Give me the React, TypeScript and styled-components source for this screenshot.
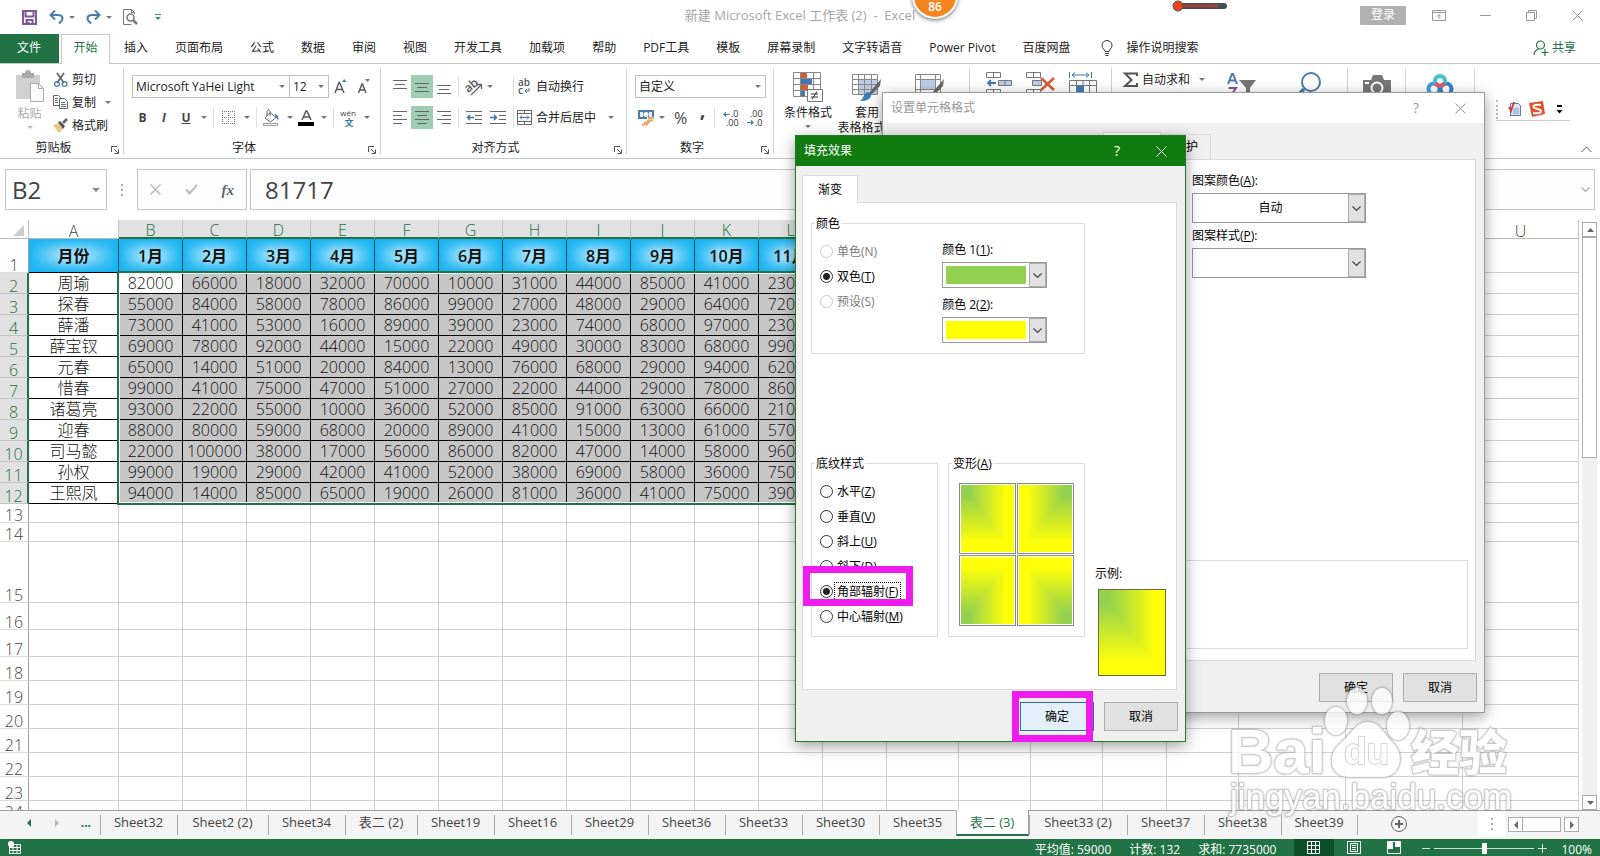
import React from 'react';
import styled, { createGlobalStyle } from 'styled-components';

const ui = `"Open Sans", "Noto Sans CJK SC", sans-serif`;

const Global = createGlobalStyle`
  * { box-sizing: border-box; }
  body { margin: 0; overflow: hidden; background: #fff; }
  button, input, select { font: inherit; color: inherit; margin: 0; padding: 0; border: 0; background: none; border-radius: 0; outline: 0; }
  select { appearance: none; }
  svg { display: block; flex: none; overflow: visible; }
`;

const Shell = styled.div`
  position: relative;
  display: flex;
  flex-direction: column;
  height: 100vh;
  overflow: hidden;
  font: 12px/16px ${ui};
  color: #222;
  background: #fff;
`;

/* ---------- title bar ---------- */
const TitleBar = styled.header`
  display: grid;
  grid-template-columns: 1fr auto 1fr;
  align-items: center;
  height: 34px;
  padding-bottom: 4px;
`;
const QuickAccess = styled.div`
  display: flex;
  align-items: center;
  padding: 4px 0 0 15px;
`;
const Title = styled.div`
  font-size: 13px;
  color: #a6a6a6;
  white-space: pre;
`;
const WindowControls = styled.div`
  display: flex;
  align-items: center;
  justify-content: flex-end;
  color: #999;
`;
const SignIn = styled.button`
  width: 46px;
  height: 19px;
  margin-right: 10px;
  background: #b1b1b1;
  color: #fff;
  border-radius: 1px;
  line-height: 18px;
`;
const Tool = styled.button<{ $w: number; $on?: boolean }>`
  display: flex;
  flex: none;
  align-items: center;
  justify-content: center;
  gap: 5px;
  width: ${(p) => p.$w}px;
  height: 23px;
  color: #444;
  background: ${(p) => (p.$on ? '#9fcdb3' : 'transparent')};
`;

/* ---------- ribbon tabs ---------- */
const TabStrip = styled.nav`
  display: flex;
  height: 30px;
  align-items: stretch;
  border-bottom: 1px solid #c8c8c8;
`;
const FileTab = styled.button`
  width: 59px;
  height: 29px;
  padding: 0 1px 1px 0;
  color: #fff;
  background: #217346;
`;
const TabList = styled.div`
  display: flex;
  flex: 1;
  gap: 27px;
  align-items: center;
  margin-left: 2px;
`;
const RibbonTab = styled.button<{ $active?: boolean }>`
  height: 30px;
  white-space: nowrap;
  padding: 0 0 1px;
  ${(p) =>
    p.$active &&
    `color: #217346; background: #fff; border: 1px solid #c8c8c8; border-bottom: 0; width: 49px; margin-right: -13px; padding-bottom: 2px; `}
`;
const TellMe = styled.button`
  display: flex;
  align-items: center;
  gap: 14px;
  margin-left: 3px;
  padding-bottom: 1px;
`;
const Share = styled.button`
  display: flex;
  align-items: center;
  gap: 3px;
  margin: 0 24px 0 auto;
  padding-bottom: 1px;
  color: #217346;
`;

/* ---------- ribbon ---------- */
const Ribbon = styled.div`
  display: flex;
  height: 95px;
  padding: 4px 0;
  border-bottom: 1px solid #c8c8c8;
`;
const Group = styled.section<{ $w: number }>`
  display: flex;
  flex-direction: column;
  justify-content: space-between;
  flex: none;
  width: ${(p) => p.$w}px;
  border-right: 1px solid #d2d2d2;
`;
const GroupFoot = styled.footer`
  display: flex;
  align-items: flex-end;
  height: 14px;
  padding-right: 4px;
`;
const GroupName = styled.span`
  flex: 1;
  padding-right: 4px;
  line-height: 12px;
  text-align: center;
`;
const Rows = styled.div<{ $left: number }>`
  display: flex;
  flex-direction: column;
  gap: 8px;
  padding: 7px 0 0 ${(p) => p.$left}px;
`;
const Row = styled.div`
  display: flex;
  align-items: center;
  height: 23px;
`;
const Rule = styled.i`
  width: 1px;
  height: 21px;
  margin: 0 3px;
  background: #e1e1e1;
`;
const Caret = styled.i<{ $dim?: boolean }>`
  border: 3px solid transparent;
  border-top: 3px solid ${(p) => (p.$dim ? '#bbb' : '#777')};
  border-bottom: 0;
`;
const Combo = styled.label<{ $w: number }>`
  position: relative;
  width: ${(p) => p.$w}px;
  height: 23px;
  margin-right: -1px;
  border: 1px solid #c0c0c0;
  select { width: 100%; height: 21px; padding-left: 3px; display: block; }
  i { position: absolute; right: 4px; top: 9px; }
`;
const Clip = styled.div`
  display: flex;
  padding-left: 14px;
`;
const BigTool = styled.button<{ $w: number; $dim?: boolean }>`
  display: flex;
  flex-direction: column;
  align-items: center;
  width: ${(p) => p.$w}px;
  padding-top: 4px;
  line-height: 15px;
  color: ${(p) => (p.$dim ? '#aaa' : 'inherit')};
  white-space: nowrap;
  svg { margin-bottom: 3px; }
  > i { margin-top: 5px; }
`;
const MenuLine = styled.span`
  display: flex;
  align-items: center;
  gap: 5px;
`;
const ToolStack = styled.div`
  display: flex;
  flex-direction: column;
  padding-left: 8px;
`;
const TextTool = styled.button<{ $caretGap?: number }>`
  display: flex;
  align-items: center;
  height: 23px;
  gap: 3px;
  white-space: nowrap;
  i { margin-left: ${(p) => p.$caretGap ?? 0}px; }
`;
const BigRow = styled.div<{ $left: number; $gap?: number }>`
  display: flex;
  align-items: flex-start;
  gap: ${(p) => p.$gap ?? 0}px;
  padding-left: ${(p) => p.$left}px;
`;
const RibbonEnd = styled.div`
  display: flex;
  flex: 1;
  flex-direction: column;
  align-items: flex-end;
  justify-content: space-between;
  padding: 30px 8px 0 21px;
`;
const AddinBar = styled.div`
  display: flex;
  align-items: center;
  align-self: flex-start;
  height: 23px;
  gap: 8px;
  padding: 0 5px 0 0;
  border-bottom: 1px solid #d0d0d0;
`;
const Grip = styled.i`
  height: 19px;
  border-left: 2px dotted #bbb;
  margin-right: 2px;
`;
const PercentText = styled.span`
  font-size: 16px;
  color: #444;
`;
const CommaText = styled.b`
  height: 28px;
  font-size: 20px;
  line-height: 12px;
  color: #444;
`;

/* ---------- formula bar ---------- */
const FormulaBar = styled.div`
  display: flex;
  height: 61px;
  padding: 10px 5px 10px;
`;
const NameBox = styled.label`
  display: flex;
  align-items: center;
  width: 102px;
  border: 1px solid #c6c6c6;
  padding: 0 6px;
  input { flex: 1; width: 60px; font-size: 24px; line-height: 36px; color: #444; }
`;
const Dots = styled.div`
  display: flex;
  flex-direction: column;
  justify-content: center;
  gap: 3px;
  margin: 0 14px;
  i { width: 2px; height: 2px; background: #aaa; }
`;
const EditButtons = styled.div`
  display: flex;
  align-items: center;
  justify-content: space-around;
  width: 110px;
  border: 1px solid #c6c6c6;
  margin-right: 3px;
  background: #fdfdfd;
`;
const FxMark = styled.i`
  font: italic 700 15px/16px "Liberation Serif", serif;
  color: #666;
`;
const FormulaBox = styled.label`
  display: flex;
  align-items: center;
  flex: 1;
  padding: 0 4px 0 14px;
  border: 1px solid #c6c6c6;
  background: #fdfdfd;
  input { flex: 1; font-size: 24px; line-height: 36px; color: #444; }
`;

/* ---------- sheet ---------- */
const SheetArea = styled.main`
  display: flex;
  flex: 1;
  min-height: 0;
`;
const GridView = styled.div`
  position: relative;
  flex: 1;
  overflow: hidden;
`;
const SheetTable = styled.table`
  width: 100%;
  table-layout: fixed;
  border-collapse: separate;
  border-spacing: 0;
  font-size: 16px;
  font-weight: 300;
  text-align: center;
`;
const Tr = styled.tr<{ $h: number }>`
  height: ${(p) => p.$h}px;
`;
const ColHead = styled.th<{ $sel?: boolean }>`
  padding: 4px 0 0;
  height: 19px;
  line-height: 13px;
  font-weight: 300;
  color: ${(p) => (p.$sel ? '#217346' : '#444')};
  background: ${(p) => (p.$sel ? '#e1e1e1' : '#fff')};
  border-right: 1px solid #c4c4c4;
  border-bottom: ${(p) => (p.$sel ? '2px solid #217346' : '1px solid #b8b8b8')};
`;
const RowHead = styled.th<{ $sel?: boolean }>`
  padding: 0;
  line-height: 14px;
  vertical-align: bottom;
  font-weight: 300;
  color: ${(p) => (p.$sel ? '#217346' : '#444')};
  background: ${(p) => (p.$sel ? '#e1e1e1' : '#fff')};
  border-bottom: 1px solid ${(p) => (p.$sel ? '#c4c4c4' : '#dcdcdc')};
  border-right: ${(p) => (p.$sel ? '2px solid #217346' : '1px solid #a0a0a0')};
`;
const Cell = styled.td<{ $kind?: 'head' | 'name' | 'value' | 'active' }>`
  padding: 0;
  line-height: 20px;
  overflow: hidden;
  white-space: nowrap;
  border-right: 1px solid #d0d0d0;
  border-bottom: 1px solid #d0d0d0;
  ${(p) => p.$kind && `border-color: #000; color: #111;`}
  ${(p) => p.$kind === 'value' && `background: #c6c6c6;`}
  ${(p) =>
    p.$kind === 'head' &&
    `font-weight: 600; border-right-color: #1b4d5c;
     background:
      linear-gradient(to right, #19b4f1, rgba(25,180,241,0) 38%, rgba(25,180,241,0) 62%, #19b4f1),
      linear-gradient(to bottom, #19b4f1, rgba(25,180,241,0) 40%, rgba(25,180,241,0) 60%, #19b4f1),
      #9fe0fb;`}
`;
/* short blank rows must not be stretched by an empty cell's line box */
const Blank = styled(Cell)`
  line-height: 14px;
`;
const Selection = styled.div`
  position: absolute;
  left: 117px;
  top: 51px;
  width: 770px;
  height: 234px;
  border: 2px solid #217346;
  box-shadow: inset 0 0 0 1px #fff;
  pointer-events: none;
`;
const VScroll = styled.div`
  display: flex;
  flex-direction: column;
  width: 15px;
  margin: 2px 3px 0;
  background: #f0f0f0;
`;
const ScrollButton = styled.button`
  display: flex;
  align-items: center;
  justify-content: center;
  width: 15px;
  height: 15px;
  border: 1px solid #ababab;
  background: #fff;
`;
const VThumb = styled.div`
  height: 221px;
  border: 1px solid #ababab;
  background: #fff;
`;
const Push = styled.div`
  flex: 1;
`;

/* ---------- sheet tabs ---------- */
const SheetTabs = styled.nav`
  display: flex;
  align-items: flex-start;
  height: 29px;
  border-top: 1px solid #a0a0a0;
  background: #f4f4f4;
`;
const TabNav = styled.div`
  display: flex;
  align-items: center;
  justify-content: space-between;
  width: 100px;
  height: 24px;
  padding: 0 9px 0 25px;
  color: #217346;
  font-weight: 700;
`;
const SheetTab = styled.button<{ $w: number; $active?: boolean }>`
  flex: none;
  width: ${(p) => p.$w}px;
  height: 20px;
  margin-top: 4px;
  padding: 0 1px 6px 0;
  font-size: 13px;
  line-height: 14px;
  color: #444;
  border-left: 1px solid #ababab;
  ${(p) =>
    p.$active &&
    `height: 26px; margin-top: -1px; padding: 0 1px 1px 0; color: #217346; background: #fff; border-right: 1px solid #a0a0a0; border-bottom: 2px solid #217346;`}
`;
const AddSheet = styled.button`
  padding: 0 33px 2px;
  height: 20px;
  margin-top: 4px;
  border-left: 1px solid #ababab;
`;
const HScroll = styled.div`
  display: flex;
  height: 15px;
  margin: 6px 21px 0 3px;
  background: #f4f4f4;
`;
const HThumb = styled.div`
  width: 39px;
  margin: 0 3px 0 -1px;
  border: 1px solid #ababab;
  background: #fff;
`;
const HGrip = styled.div`
  display: flex;
  justify-content: center;
  width: 27px;
  height: 26px;
  margin-left: auto;
  background: #fff;
`;

/* ---------- status bar ---------- */
const StatusBar = styled.footer`
  display: flex;
  align-items: center;
  height: 17px;
  padding: 0 8px;
  color: #fff;
  background: #217346;
`;
const Stats = styled.div`
  display: flex;
  gap: 18px;
  margin: 4px 18px 0 auto;
`;
const View = styled.button<{ $on?: boolean }>`
  display: flex;
  align-items: center;
  justify-content: center;
  width: 40px;
  height: 17px;
  background: ${(p) => (p.$on ? '#0b4f29' : 'transparent')};
`;
const Zoom = styled.label`
  display: flex;
  align-items: center;
  gap: 4px;
  margin: 2px 14px 0 8px;
  input {
    width: 100px;
    height: 12px;
    appearance: none;
    background: linear-gradient(#cfe3d8, #cfe3d8) center / 100% 1px no-repeat;
  }
  input::-webkit-slider-thumb { appearance: none; width: 5px; height: 11px; background: #fff; }
`;
const ZoomText = styled.span`
  margin-top: 4px;
`;

/* ---------- dialogs ---------- */
const Dialog = styled.section<{ $x: number; $y: number; $w: number; $h: number; $front?: boolean }>`
  position: absolute;
  isolation: isolate;
  left: ${(p) => p.$x}px;
  top: ${(p) => p.$y}px;
  width: ${(p) => p.$w}px;
  height: ${(p) => p.$h}px;
  display: flex;
  flex-direction: column;
  color: #000;
  background: #f0f0f0;
  border: 1px solid ${(p) => (p.$front ? '#1f7a2a' : '#9a9a9a')};
  box-shadow: 0 4px 14px rgba(0, 0, 0, 0.38);
`;
const DialogTitle = styled.header<{ $front?: boolean }>`
  display: flex;
  align-items: center;
  height: 30px;
  flex: none;
  padding: 0 18px 0 8px;
  color: ${(p) => (p.$front ? '#fff' : '#999')};
  background: ${(p) => (p.$front ? '#107c10' : '#fff')};
`;
const DialogHelp = styled.button`
  margin: 0 34px 0 auto;
  width: 10px;
  font-size: 14px;
`;
const DialogTabs = styled.div<{ $left: number }>`
  display: flex;
  align-items: flex-end;
  padding: 9px 0 0 ${(p) => p.$left}px;
  position: relative;
  z-index: 1;
`;
const DialogTab = styled.button<{ $w: number; $active?: boolean }>`
  width: ${(p) => p.$w}px;
  height: ${(p) => (p.$active ? 28 : 25)}px;
  margin-bottom: ${(p) => (p.$active ? -1 : 0)}px;
  border: 1px solid #dcdcdc;
  border-bottom: 0;
  background: ${(p) => (p.$active ? '#fff' : '#f0f0f0')};
`;
const Panel = styled.div<{ $left: number; $top: number }>`
  display: flex;
  flex-direction: column;
  flex: 1;
  margin: 0 8px 0 6px;
  padding: ${(p) => p.$top}px 7px 0 ${(p) => p.$left}px;
  border: 1px solid #dcdcdc;
  background: #fff;
`;
const PatternFields = styled.div`
  padding-left: 294px;
`;
const DialogFoot = styled.footer`
  display: flex;
  justify-content: flex-end;
  gap: 10px;
  padding: 12px 7px 10px;
`;
const PushButton = styled.button<{ $hot?: boolean }>`
  width: 74px;
  height: 29px;
  border: 1px solid ${(p) => (p.$hot ? '#2f6fa8' : '#adadad')};
  background: ${(p) => (p.$hot ? '#e3f0fa' : '#e1e1e1')};
`;
const Box = styled.fieldset<{ $w: number; $h: number }>`
  width: ${(p) => p.$w}px;
  height: ${(p) => p.$h}px;
  margin: 0;
  padding: 7px 8px 0;
  border: 1px solid #dcdcdc;
  legend { margin-left: -5px; padding: 2px 1px 0; line-height: 16px; height: 18px; }
`;
const Columns = styled.div<{ $gap: number; $grow?: boolean }>`
  display: flex;
  flex: ${(p) => (p.$grow ? 1 : 'none')};
  gap: ${(p) => p.$gap}px;
`;
const Spread = styled.div`
  display: flex;
  flex-direction: column;
  justify-content: space-between;
  height: 423px;
`;
const Options = styled.div<{ $top?: number }>`
  display: flex;
  flex-direction: column;
  padding-top: ${(p) => p.$top ?? 0}px;
`;
const Option = styled.label<{ $off?: boolean }>`
  display: flex;
  align-items: center;
  gap: 2px;
  height: 25px;
  white-space: nowrap;
  color: ${(p) => (p.$off ? '#7a7a7a' : '#000')};
  input {
    appearance: none;
    width: 13px;
    height: 13px;
    border: 1px solid ${(p) => (p.$off ? '#ccc' : '#333')};
    border-radius: 50%;
    background: #fff;
  }
  input:checked { background: radial-gradient(#222 0 3px, #fff 4px); }
  span { padding: 0 2px; line-height: 17px; }
`;
const FocusText = styled.span`
  outline: 1px dotted #000;
`;
const Field = styled.label`
  display: flex;
  flex-direction: column;
  height: 55px;
`;
const Drop = styled.span<{ $w: number; $h: number }>`
  display: flex;
  width: ${(p) => p.$w}px;
  height: ${(p) => p.$h}px;
  margin-top: 4px;
  border: 1px solid #999;
  background: #fff;
  select { flex: 1; min-width: 0; text-align: center; text-align-last: center; }
`;
const Swatch = styled.select<{ $c: string }>`
  margin: 3px;
  background: ${(p) => p.$c};
`;
const DropArrow = styled.span`
  display: flex;
  align-items: center;
  justify-content: center;
  width: 17px;
  border: 1px solid #adadad;
  background: #e1e1e1;
`;
const Thumbs = styled.div`
  display: grid;
  grid-template-columns: 57px 57px;
  grid-auto-rows: 71px;
  gap: 1px;
  padding: 4px 0 0 2px;
`;
const Thumb = styled.button`
  padding: 1px;
  border: 1px solid #888;
  svg { width: 100%; height: 100%; }
`;
const SampleArea = styled.div`
  display: flex;
  flex-direction: column;
  justify-content: flex-end;
  padding: 0 0 13px 10px;
`;
const Sample = styled.div`
  width: 68px;
  height: 87px;
  margin: 7px 0 0 3px;
  border: 1px solid #6a6a3a;
  svg { width: 100%; height: 100%; }
`;
const PreviewBox = styled.div`
  height: 89px;
  margin: auto 0 11px;
  border: 1px solid #dcdcdc;
`;
const Highlight = styled.div<{ $x: number; $y: number; $w: number; $h: number }>`
  position: absolute;
  left: ${(p) => p.$x}px;
  top: ${(p) => p.$y}px;
  width: ${(p) => p.$w}px;
  height: ${(p) => p.$h}px;
  border: 7px solid #ef1cee;
  pointer-events: none;
`;
const Floating = styled.div<{ $x: number; $y: number }>`
  position: absolute;
  left: ${(p) => p.$x}px;
  top: ${(p) => p.$y}px;
  pointer-events: none;
`;
const Ball = styled.div`
  width: 46px;
  height: 46px;
  padding-top: 24px;
  border: 2px solid #fff;
  border-radius: 50%;
  text-align: center;
  color: #fff;
  font-weight: 600;
  background: #f5861f;
  box-shadow: 0 1px 4px rgba(0, 0, 0, 0.6);
`;

/* ---------- icons ---------- */
const Lines = ({ rows, w = 14 }: { rows: [number, number, number][]; w?: number }) => (
  <svg width={w} height="14" stroke="#666" fill="none">
    {rows.map(([y, a, b]) => (
      <path key={y} d={`M${a} ${y}.5H${b}`} />
    ))}
  </svg>
);
const Launcher = () => (
  <svg width="8" height="8" fill="none" stroke="#555">
    <path d="M.5 6V.5H6M3 3l4 4M7.5 3.5v4h-4" />
  </svg>
);
const Chevron = ({ c = '#444', s = 9 }: { c?: string; s?: number }) => (
  <svg width={s} height={s} viewBox="0 0 9 9" fill="none" stroke={c} strokeWidth="1.2">
    <path d="M.5 2.500l4 4 4-4" />
  </svg>
);
const Cross = ({ s = 11, c = 'currentColor', w = 1 }: { s?: number; c?: string; w?: number }) => (
  <svg width={s} height={s} viewBox="0 0 11 11" stroke={c} strokeWidth={w} fill="none">
    <path d="M.5.5l10 10M10.5.5l-10 10" />
  </svg>
);
const SaveIcon = () => (
  <svg width="15" height="15" fill="none" stroke="#80569c" strokeWidth="2">
    <path d="M1 1h13v13H1zM3.500 1v5.500h8V1" />
    <path d="M4.500 14v-4h6v4M6.500 14v-2" />
  </svg>
);
const UndoIcon = ({ flip }: { flip?: boolean }) => (
  <svg width="15" height="14" viewBox="0 0 15 14" fill="none" stroke="#4a7dae" strokeWidth="2">
    <g transform={flip ? 'matrix(-1 0 0 1 15 0)' : undefined}>
      <path d="M2 5h7c5 0 6 4 2 7.500l-1 1M6 .5L1.500 5 6 9.500" />
    </g>
  </svg>
);
const PreviewIcon = () => (
  <svg width="15" height="17" fill="none" stroke="#777">
    <path d="M11.500 5V3.500l-3-3h-8v15h8M8.500.5v3h3" />
    <circle cx="7.500" cy="8.500" r="3.500" strokeWidth="1.500" />
    <path d="M10 11l4 4" strokeWidth="2.500" />
  </svg>
);
const PasteIcon = () => (
  <svg width="28" height="31">
    <path d="M0 3h24v24H0z" fill="#d0d0d0" />
    <path d="M6 1h3a3 3 0 016 0h3v5H6z" fill="#aaa" />
    <path d="M14.500 11.500h8l5 5v13h-13z" fill="#fafafa" stroke="#aaa" />
    <path d="M22.500 11.500v5h5" fill="none" stroke="#aaa" />
  </svg>
);
const CutIcon = () => (
  <svg width="16" height="16" fill="none">
    <path d="M4 1l7 10M11 1L4 11" stroke="#666" strokeWidth="1.800" />
    <circle cx="4" cy="12" r="2.400" stroke="#4a7dae" strokeWidth="1.300" />
    <circle cx="11.500" cy="12" r="2.400" stroke="#4a7dae" strokeWidth="1.300" />
  </svg>
);
const CopyIcon = () => (
  <svg width="16" height="15" fill="#fff" stroke="#666">
    <path d="M.5.500h5l2 2v8h-7zM2 3.500h3M2 5.500h3M2 7.500h3" />
    <path d="M6.500 3.500h5l3 3v7h-8z" />
    <path d="M8 7.500h4M8 9.500h5M8 11.500h5" stroke="#4a7dae" />
  </svg>
);
const BrushIcon = () => (
  <svg width="16" height="15">
    <path d="M0 7l6-2 4 6-4 4z" fill="#edc587" />
    <path d="M5 4l2-1 5 5-2 3z" fill="#555" />
    <path d="M9 4l4-4 2 2-4 4z" fill="#666" />
  </svg>
);
const BorderIcon = () => (
  <svg width="14" height="14" fill="none" stroke="#777" strokeDasharray="1 1">
    <path d="M0 .500h13M0 6.500h13M0 12.500h13M.5 0v13M6.500 0v13M12.500 0v13" />
  </svg>
);
const BucketIcon = () => (
  <svg width="17" height="16" fill="none" stroke="#666">
    <path d="M7 2.500l6 5-5.500 4.500L2 8zM7 6V1.500a1.500 1.500 0 00-3 0V6" />
    <path d="M12 4c3 1 4 3 3 7-1-3-2-4-3-4z" fill="#4a7dae" stroke="none" />
    <path d="M.5 13.500h14v2H.5z" fill="#fff" stroke="#999" />
  </svg>
);
const FontColorIcon = () => (
  <svg width="17" height="16">
    <path d="M4 10L8 1h1l4 9M5.500 7h6" stroke="#555" strokeWidth="1.500" fill="none" />
    <path d="M0 12h16v4H0z" fill="#000" />
  </svg>
);
const GrowFont = ({ down }: { down?: boolean }) => (
  <svg width="14" height="15">
    <path d={down ? 'M1.500 14l3.500-9h.5l3.500 9M3 11h5' : 'M1 14L5 3.500h.5L10 14M2.500 10.500h6'} stroke="#555" strokeWidth="1.400" fill="none" />
    <path d={down ? 'M8 0h5l-2.500 3z' : 'M8 3h4.500L10.200 0z'} fill="#4a7dae" />
  </svg>
);
const PhoneticIcon = () => (
  <svg width="17" height="18" viewBox="0 0 17 18" fontFamily={ui} textAnchor="middle">
    <text x="8" y="7" fontSize="8" fill="#444">wén</text>
    <text x="9" y="17" fontSize="9" fontWeight="700" fill="#3b76ad">文</text>
  </svg>
);
const RotateIcon = () => (
  <svg width="18" height="16" viewBox="0 0 18 16">
    <text x="1" y="12" fontSize="12" fontFamily={ui} fontWeight="600" fill="#555" transform="rotate(-40 5 10)">ab</text>
    <path d="M6 16l10-10M12 5.500h4.500V10" stroke="#666" fill="none" strokeWidth="1.300" />
  </svg>
);
const IndentIcon = ({ out }: { out?: boolean }) => (
  <svg width="17" height="14" fill="none" stroke="#666">
    <path d="M0 .500h16M9 4.500h7M9 8.500h7M0 12.500h16" />
    <path d={out ? 'M8 6.500H1.500M4 4L1.500 6.500 4 9' : 'M0 6.500h6.500M4 4l2.500 2.500L4 9'} stroke="#3b76ad" strokeWidth="1.500" />
  </svg>
);
const WrapIcon = () => (
  <svg width="16" height="16" viewBox="0 0 16 16" fontFamily={ui}>
    <text x="1" y="7" fontSize="10" fontWeight="600" fill="#555">ab</text>
    <text x="1" y="15" fontSize="10" fontWeight="600" fill="#555">c</text>
    <path d="M12 9v3H8M10 10l-2 2 2 2" stroke="#3b76ad" fill="none" />
  </svg>
);
const MergeIcon = () => (
  <svg width="16" height="15" fill="none" stroke="#666">
    <path d="M.5.500h14v14H.5zM.5 3.500h14M.5 11.500h14M7.500.500v3M7.500 11.500v3" />
    <path d="M3 7.500h9M5 5.500l-2 2 2 2M10 5.500l2 2-2 2" stroke="#3b76ad" />
  </svg>
);
const MoneyIcon = () => (
  <svg width="17" height="16">
    <path d="M0 0h16v9H0z" fill="#4a7dae" />
    <path d="M2 2h3v5H2zM11 2h3v5h-3z" fill="#e6eef6" />
    <circle cx="8" cy="4.500" r="2.500" fill="#fff" />
    <path d="M9 7h7v9H3v-3h6z" fill="#fff" />
    <path d="M10 8h6M9 10.500h6M6 12.500h6M4 14.500h6" stroke="#e7a868" strokeWidth="1.800" />
  </svg>
);
const DecimalIcon = ({ less }: { less?: boolean }) => (
  <svg width="17" height="16" viewBox="0 0 17 16" fontSize="9" fontFamily={ui} fill="#333">
    <text x={less ? 3 : 8} y="7">{less ? '.00' : '.0'}</text>
    <text x={less ? 8 : 3} y="16">{less ? '.0' : '.00'}</text>
    <path d={less ? 'M0 12.500h6M4 10.500l2 2-2 2' : 'M7 4.500H1M3 2.500l-2 2 2 2'} stroke="#3b76ad" strokeWidth="1.200" fill="none" />
  </svg>
);
const CondIcon = () => (
  <svg width="30" height="30">
    <path d="M.5.500h27v24H.5zM.5 6.500h27M.5 12.500h27M.5 18.500h27M7.500.500v24M20.500.500v24" fill="#fff" stroke="#888" />
    <path d="M8 1h6v5H8zM8 13h7v5H8z" fill="#d0603c" />
    <path d="M8 7h11v5H8zM8 19h4v5H8z" fill="#4477b0" />
    <path d="M14.500 17.500h15v12h-15z" fill="#fff" stroke="#777" />
    <path d="M18 22h7M18 25h7M24 19.500l-5 8" stroke="#333" />
  </svg>
);
const FormatTableIcon = ({ plain }: { plain?: boolean }) => (
  <svg width="30" height="30">
    <path d="M.5 2.500h25v20H.5z" fill="#fff" stroke="#888" />
    <path d={plain ? 'M6 7h14v11H6z' : 'M7 8h18v14H7z'} fill="#b9cde5" />
    <path d={plain ? 'M.5 7.500h25M5.500 2.500v20M20.500 2.500v20M.5 17.500h25' : 'M.5 7.500h25M.5 12.500h25M.5 17.500h25M6.500 2.500v20M12.500 2.500v20M19.500 2.500v20'} stroke="#888" fill="none" />
    <path d="M29 7l-1 7-9 9-2-2z" fill="#666" />
    <path d="M16 20c3 1 4 4 2 6-3 3-7 3-10 3 4-2 3-8 8-9z" fill="#3b7cb8" />
  </svg>
);
const InsertIcon = () => (
  <svg width="27" height="26" fill="none" stroke="#777">
    <path d="M.5.500h14v5H.5zM7.500.500v5M.5 17.500h14v5H.5zM7.500 17.500v5" />
    <path d="M12.500 8.500h13v5h-13zM19 8.500v5" fill="#b9cde5" />
    <path d="M10 11H2M5 8l-3 3 3 3" stroke="#3b76ad" strokeWidth="1.800" />
  </svg>
);
const DeleteIcon = () => (
  <svg width="30" height="26" fill="none" stroke="#777">
    <path d="M.5.500h14v5H.5zM7.500.500v5M.5 17.500h14v5H.5zM7.500 17.500v5" />
    <path d="M6.500 8.500h9v5h-9z" fill="#b9cde5" />
    <path d="M15 6l13 12M28 6L15 18" stroke="#d9583c" strokeWidth="2.500" />
  </svg>
);
const SizeIcon = () => (
  <svg width="29" height="30" fill="none" stroke="#777">
    <path d="M.5 0v6M22.500 0v6M3 3h17M6 .500L3 3l3 2.500M17 .500L20 3l-3 2.500" stroke="#3b76ad" />
    <path d="M.5 8.500h27v20H.5zM.5 13.500h27M7.500 8.500v20M20.500 8.500v20M14 8.500v5" />
    <path d="M8 14h7v12H8z" fill="#3b7cb8" stroke="none" />
  </svg>
);
const SigmaIcon = () => (
  <svg width="16" height="16" fill="none" stroke="#555" strokeWidth="2">
    <path d="M14 4V1.500H2L8.500 8 2 14H14v-3" />
  </svg>
);
const SortIcon = () => (
  <svg width="30" height="30">
    <path d="M1 12L5 2h1l4 10M2.500 8.500h6" stroke="#4a7dae" strokeWidth="2" fill="none" />
    <path d="M1.500 16H9L2 26h8" stroke="#80569c" strokeWidth="2" fill="none" />
    <path d="M12 8h17l-6 8v10l-4-3v-7z" fill="#777" />
  </svg>
);
const FindIcon = () => (
  <svg width="26" height="28" fill="none" stroke="#4a7dae">
    <circle cx="14" cy="10" r="9" strokeWidth="2" />
    <path d="M7 17l-7 7" strokeWidth="3.500" />
  </svg>
);
const CameraIcon = () => (
  <svg width="28" height="27">
    <path d="M0 8h8l2-5h9l2 5h7v19H0z" fill="#777" />
    <circle cx="14" cy="16" r="5.500" fill="#777" stroke="#fff" strokeWidth="2" />
    <path d="M2 10h4v2H2z" fill="#fff" />
  </svg>
);
const CloudIcon = () => (
  <svg width="28" height="28" fill="none" strokeWidth="4">
    <circle cx="7" cy="17" r="5.500" stroke="#3d9be0" />
    <circle cx="19" cy="17" r="5.500" stroke="#2f7fd0" />
    <circle cx="13" cy="9" r="5" stroke="#4cc0c8" />
    <path d="M8.500 11a5 5 0 009 0" stroke="#e25563" />
  </svg>
);
const PersonIcon = () => (
  <svg width="16" height="16" fill="none" stroke="#217346" strokeWidth="1.200">
    <circle cx="7.500" cy="5" r="4" />
    <path d="M1 15c0-3.500 2-5 4.500-6M12 9v7M8.500 12.500h7" />
  </svg>
);
const BulbIcon = () => (
  <svg width="12" height="17" fill="none" stroke="#333">
    <path d="M4 11.500c0-2-3-3-3-6a5 5 0 0110 0c0 3-3 4-3 6zM4 13.500h4M4.500 15.500h3" />
  </svg>
);
const NoteIcon = () => (
  <svg width="13" height="16">
    <path d="M2.500 2.500h8l2 2v10h-10z" fill="#dce6f5" stroke="#5b7bb0" />
    <path d="M5 8h6M5 10h6M5 12h6" stroke="#7f9dcc" />
    <path d="M1 6l2 4 3-9" stroke="#d8392b" strokeWidth="1.800" fill="none" />
  </svg>
);
const SogouIcon = () => (
  <svg width="16" height="16">
    <path d="M0 2l14-2 2 13-13 3z" fill="#e4522b" />
    <path d="M12 4C7 3.500 4 4 4.500 6S12 7.500 12 10s-4 2.500-8 2" stroke="#fff" strokeWidth="2" fill="none" />
  </svg>
);
const Tri = ({ d, c = '#666' }: { d: string; c?: string }) => (
  <svg width="8" height="8" fill={c}>
    <path d={d} />
  </svg>
);
const CornerFade = ({ id, fx, fy }: { id: string; fx?: boolean; fy?: boolean }) => (
  <svg viewBox="0 0 100 100" preserveAspectRatio="none">
    <defs>
      <linearGradient id={`${id}h`} x1="0" x2="1" y1="0" y2="0">
        <stop offset=".15" stopColor="#92d050" />
        <stop offset=".85" stopColor="#ffff08" />
      </linearGradient>
      <linearGradient id={`${id}v`} x1="0" x2="0" y1="0" y2="1">
        <stop offset=".15" stopColor="#92d050" />
        <stop offset=".85" stopColor="#ffff08" />
      </linearGradient>
    </defs>
    <g transform={`matrix(${fx ? -1 : 1} 0 0 ${fy ? -1 : 1} ${fx ? 100 : 0} ${fy ? 100 : 0})`}>
      <path d="M0 0h100v100H0z" fill={`url(#${id}h)`} />
      <path d="M0 0v100h100z" fill={`url(#${id}v)`} />
    </g>
  </svg>
);
const MarkArt = styled.svg`
  opacity: 0.78;
  paint-order: stroke;
  filter: drop-shadow(0 0 1px rgba(0, 0, 0, 0.4));
`;
const Watermark = () => (
  <MarkArt width="300" height="140" viewBox="0 0 300 140" fill="#fff" stroke="#bbb" strokeWidth="1.500" fontFamily={`"Liberation Sans", "Noto Sans CJK SC", sans-serif`} fontWeight="700">
    <ellipse cx="107" cy="41" rx="11" ry="14" />
    <ellipse cx="128" cy="21" rx="10" ry="13" />
    <ellipse cx="153" cy="21" rx="10" ry="13" />
    <ellipse cx="169" cy="46" rx="11" ry="14" />
    <path d="M139 42c12 0 16 12 24 20 14 13 8 34-8 35-8 0-28 0-36 0-18-1-22-22-7-34 10-9 15-21 27-21z" />
    <text x="-1" y="93" fontSize="63">Bai</text>
    <text x="115" y="84" fontSize="37">du</text>
    <text x="182" y="90" fontSize="48" fontWeight="900">经验</text>
    <text x="1" y="129" fontSize="35" fontWeight="400">jingyan.baidu.com</text>
  </MarkArt>
);

/* ---------- data ---------- */
const columns = [...'ABCDEFGHIJKLMNOPQRSTU'];
const columnWidth = (c: string) =>
  ({ A: 90, N: 72, O: 72, P: 72, R: 72, S: 107, T: 117 } as Record<string, number>)[c] ?? 64;
const isSelected = (c: string) => c > 'A' && c < 'N';
const people: [string, number[]][] = [
  ['周瑜', [82, 66, 18, 32, 70, 10, 31, 44, 85, 41, 23]],
  ['探春', [55, 84, 58, 78, 86, 99, 27, 48, 29, 64, 72]],
  ['薛潘', [73, 41, 53, 16, 89, 39, 23, 74, 68, 97, 23]],
  ['薛宝钗', [69, 78, 92, 44, 15, 22, 49, 30, 83, 68, 99]],
  ['元春', [65, 14, 51, 20, 84, 13, 76, 68, 29, 94, 62]],
  ['惜春', [99, 41, 75, 47, 51, 27, 22, 44, 29, 78, 86]],
  ['诸葛亮', [93, 22, 55, 10, 36, 52, 85, 91, 63, 66, 21]],
  ['迎春', [88, 80, 59, 68, 20, 89, 41, 15, 13, 61, 57]],
  ['司马懿', [22, 100, 38, 17, 56, 86, 82, 47, 14, 58, 96]],
  ['孙权', [99, 19, 29, 42, 41, 52, 38, 69, 58, 36, 75]],
  ['王熙凤', [94, 14, 85, 65, 19, 26, 81, 36, 41, 75, 39]],
];
const blankRows: [number, number][] = [
  [13, 19], [14, 19], [15, 61], [16, 27], [17, 27], [18, 24], [19, 24], [20, 24], [21, 24], [22, 24], [23, 24], [24, 19],
];
const ribbonTabs = ['插入', '页面布局', '公式', '数据', '审阅', '视图', '开发工具', '加载项', '帮助', 'PDF工具', '模板', '屏幕录制', '文字转语音', 'Power Pivot', '百度网盘'];
const sheets: [string, number][] = [
  ['Sheet32', 77], ['Sheet2 (2)', 91], ['Sheet34', 77], ['表二 (2)', 72], ['Sheet19', 77], ['Sheet16', 77], ['Sheet29', 77],
  ['Sheet36', 77], ['Sheet33', 77], ['Sheet30', 77], ['Sheet35', 77], ['表二 (3)', 73], ['Sheet33 (2)', 98], ['Sheet37', 77], ['Sheet38', 77], ['Sheet39', 76],
];
const shading: [string, string][] = [['水平', 'Z'], ['垂直', 'V'], ['斜上', 'U'], ['斜下', 'D'], ['角部辐射', 'F'], ['中心辐射', 'M']];

const Foot = ({ name }: { name: string }) => (
  <GroupFoot>
    <GroupName>{name}</GroupName>
    <Launcher />
  </GroupFoot>
);

function Sheet() {
  return (
    <SheetArea>
      <GridView>
        <SheetTable>
          <colgroup>
            <col style={{ width: 29 }} />
            {columns.map((c) => (
              <col key={c} style={c === 'U' ? undefined : { width: columnWidth(c) }} />
            ))}
          </colgroup>
          <thead>
            <Tr $h={19}>
              <ColHead>
                <svg width="24" height="11"><path d="M24 -1v11H13z" fill="#ccc" /></svg>
              </ColHead>
              {columns.map((c) => (
                <ColHead key={c} scope="col" $sel={isSelected(c)}>{c}</ColHead>
              ))}
            </Tr>
          </thead>
          <tbody>
            <Tr $h={34}>
              <RowHead scope="row">1</RowHead>
              <Cell $kind="head">月份</Cell>
              {columns.slice(1, 12).map((c, i) => (
                <Cell key={c} $kind="head">{i + 1}月</Cell>
              ))}
              {columns.slice(12).map((c) => (
                <Cell key={c} $kind={isSelected(c) ? 'head' : undefined} />
              ))}
            </Tr>
            {people.map(([name, values], r) => (
              <Tr key={name} $h={21}>
                <RowHead scope="row" $sel>{r + 2}</RowHead>
                <Cell $kind="name">{name}</Cell>
                {values.map((v, i) => (
                  <Cell key={i} $kind={r + i === 0 ? 'active' : 'value'}>{v * 1000}</Cell>
                ))}
                {columns.slice(12).map((c) => (
                  <Cell key={c} $kind={isSelected(c) ? 'value' : undefined} />
                ))}
              </Tr>
            ))}
            {blankRows.map(([n, h]) => (
              <Tr key={n} $h={h}>
                <RowHead scope="row">{n}</RowHead>
                {columns.map((c) => (
                  <Blank key={c} />
                ))}
              </Tr>
            ))}
          </tbody>
        </SheetTable>
        <Selection />
      </GridView>
      <VScroll>
        <ScrollButton aria-label="向上滚动"><Tri d="M1 6h7L4.500 2z" /></ScrollButton>
        <VThumb />
        <Push />
        <ScrollButton aria-label="向下滚动"><Tri d="M1 2h7L4.500 6z" /></ScrollButton>
      </VScroll>
    </SheetArea>
  );
}

function RibbonBar() {
  return (
    <Ribbon>
      <Group $w={124}>
        <Clip>
          <BigTool $w={31} $dim>
            <PasteIcon />
            粘贴
            <Caret $dim />
          </BigTool>
          <ToolStack>
            <TextTool><CutIcon />剪切</TextTool>
            <TextTool $caretGap={6}><CopyIcon />复制<Caret /></TextTool>
            <TextTool><BrushIcon />格式刷</TextTool>
          </ToolStack>
        </Clip>
        <Foot name="剪贴板" />
      </Group>
      <Group $w={257}>
        <Rows $left={8}>
          <Row>
            <Combo $w={158}>
              <select aria-label="字体"><option>Microsoft YaHei Light</option></select>
              <Caret />
            </Combo>
            <Combo $w={40}>
              <select aria-label="字号"><option>12</option></select>
              <Caret />
            </Combo>
            <Tool $w={26}><GrowFont /></Tool>
            <Tool $w={20}><GrowFont down /></Tool>
          </Row>
          <Row>
            <Tool $w={21}><b>B</b></Tool>
            <Tool $w={22}><b><i>I</i></b></Tool>
            <Tool $w={22}><b><u>U</u></b></Tool>
            <Tool $w={13}><Caret /></Tool>
            <Rule />
            <Tool $w={23}><BorderIcon /></Tool>
            <Tool $w={13}><Caret /></Tool>
            <Rule />
            <Tool $w={23}><BucketIcon /></Tool>
            <Tool $w={13}><Caret /></Tool>
            <Tool $w={21}><FontColorIcon /></Tool>
            <Tool $w={13}><Caret /></Tool>
            <Rule />
            <Tool $w={23}><PhoneticIcon /></Tool>
            <Tool $w={13}><Caret /></Tool>
          </Row>
        </Rows>
        <Foot name="字体" />
      </Group>
      <Group $w={246}>
        <Rows $left={8}>
          <Row>
            <Tool $w={22}><Lines rows={[[0, 0, 14], [4, 2, 12], [8, 0, 14]]} /></Tool>
            <Tool $w={22} $on><Lines rows={[[3, 0, 14], [7, 2, 12], [11, 0, 14]]} /></Tool>
            <Tool $w={22}><Lines rows={[[5, 0, 14], [9, 2, 12], [13, 0, 14]]} /></Tool>
            <Rule />
            <Tool $w={24}><RotateIcon /></Tool>
            <Tool $w={8}><Caret /></Tool>
            <Tool $w={16} />
            <Rule />
            <TextTool><WrapIcon /><span>自动换行</span></TextTool>
          </Row>
          <Row>
            <Tool $w={22}><Lines rows={[[0, 0, 14], [4, 0, 9], [8, 0, 14], [12, 0, 9]]} /></Tool>
            <Tool $w={22} $on><Lines rows={[[0, 0, 14], [4, 2, 12], [8, 0, 14], [12, 2, 12]]} /></Tool>
            <Tool $w={22}><Lines rows={[[0, 0, 14], [4, 5, 14], [8, 0, 14], [12, 5, 14]]} /></Tool>
            <Rule />
            <Tool $w={24}><IndentIcon out /></Tool>
            <Tool $w={24}><IndentIcon /></Tool>
            <Rule />
            <TextTool $caretGap={9}><MergeIcon />合并后居中<Caret /></TextTool>
          </Row>
        </Rows>
        <Foot name="对齐方式" />
      </Group>
      <Group $w={147}>
        <Rows $left={8}>
          <Row>
            <Combo $w={131}>
              <select aria-label="数字格式"><option>自定义</option></select>
              <Caret />
            </Combo>
          </Row>
          <Row>
            <Tool $w={22}><MoneyIcon /></Tool>
            <Tool $w={10}><Caret /></Tool>
            <Tool $w={27}><PercentText>%</PercentText></Tool>
            <Tool $w={17}><CommaText>,</CommaText></Tool>
            <Rule />
            <Tool $w={27}><DecimalIcon /></Tool>
            <Tool $w={21}><DecimalIcon less /></Tool>
          </Row>
        </Rows>
        <Foot name="数字" />
      </Group>
      <Group $w={196}>
        <BigRow $left={8}>
          <BigTool $w={52}><CondIcon />条件格式<Caret /></BigTool>
          <BigTool $w={66}><FormatTableIcon />套用<MenuLine>表格格式<Caret /></MenuLine></BigTool>
          <BigTool $w={60}><FormatTableIcon plain /></BigTool>
        </BigRow>
      </Group>
      <Group $w={142}>
        <BigRow $left={15} $gap={14}>
          <BigTool $w={28}><InsertIcon /></BigTool>
          <BigTool $w={28}><DeleteIcon /></BigTool>
          <BigTool $w={28}><SizeIcon /></BigTool>
        </BigRow>
      </Group>
      <Group $w={236}>
        <BigRow $left={11}>
          <TextTool $caretGap={6}><SigmaIcon />自动求和<Caret /></TextTool>
          <BigRow $left={22} $gap={38}>
            <BigTool $w={30}><SortIcon /></BigTool>
            <BigTool $w={30}><FindIcon /></BigTool>
          </BigRow>
        </BigRow>
      </Group>
      <Group $w={58}>
        <BigRow $left={14}><BigTool $w={30}><CameraIcon /></BigTool></BigRow>
      </Group>
      <Group $w={69}>
        <BigRow $left={21}><BigTool $w={28}><CloudIcon /></BigTool></BigRow>
      </Group>
      <RibbonEnd>
        <AddinBar>
          <Grip />
          <NoteIcon />
          <SogouIcon />
          <svg width="12" height="12"><path d="M4 2h5v2H4zM3.500 7h6l-3 3.500z" fill="#000" /></svg>
        </AddinBar>
        <svg width="11" height="8" fill="none" stroke="#555"><path d="M.5 6l5-5 5 5" /></svg>
      </RibbonEnd>
    </Ribbon>
  );
}

function FormatCells() {
  return (
    <Dialog $x={882} $y={92} $w={603} $h={621}>
      <DialogTitle>
        设置单元格格式
        <DialogHelp>?</DialogHelp>
        <button aria-label="关闭"><Cross /></button>
      </DialogTitle>
      <DialogTabs $left={220}>
        <DialogTab $w={58} $active />
        <DialogTab $w={50}>保护</DialogTab>
      </DialogTabs>
      <Panel $left={8} $top={13}>
        <PatternFields>
          <Field>
            <span>图案颜色(<u>A</u>):</span>
            <Drop $w={174} $h={30}>
              <select><option>自动</option></select>
              <DropArrow><Chevron /></DropArrow>
            </Drop>
          </Field>
          <Field>
            <span>图案样式(<u>P</u>):</span>
            <Drop $w={174} $h={30}>
              <select><option aria-label="无" /></select>
              <DropArrow><Chevron /></DropArrow>
            </Drop>
          </Field>
        </PatternFields>
        <PreviewBox />
      </Panel>
      <DialogFoot>
        <PushButton>确定</PushButton>
        <PushButton>取消</PushButton>
      </DialogFoot>
    </Dialog>
  );
}

function FillEffects() {
  return (
    <Dialog $x={795} $y={135} $w={391} $h={607} $front>
      <DialogTitle $front>
        填充效果
        <DialogHelp>?</DialogHelp>
        <button aria-label="关闭"><Cross /></button>
      </DialogTitle>
      <DialogTabs $left={6}>
        <DialogTab $w={56} $active>渐变</DialogTab>
      </DialogTabs>
      <Panel $left={8} $top={11}>
        <Columns $gap={0} $grow>
          <Spread>
            <Box $w={274} $h={140}>
              <legend>颜色</legend>
              <Columns $gap={63}>
                <Options>
                  <Option $off><input type="radio" name="color" disabled /><span>单色(N)</span></Option>
                  <Option><input type="radio" name="color" defaultChecked /><span>双色(<u>T</u>)</span></Option>
                  <Option $off><input type="radio" name="color" disabled /><span>预设(S)</span></Option>
                </Options>
                <Options $top={3}>
                  <Field>
                    <span>颜色 1(<u>1</u>):</span>
                    <Drop $w={105} $h={26}>
                      <Swatch $c="#92d050"><option aria-label="绿" /></Swatch>
                      <DropArrow><Chevron /></DropArrow>
                    </Drop>
                  </Field>
                  <Field>
                    <span>颜色 2(<u>2</u>):</span>
                    <Drop $w={105} $h={26}>
                      <Swatch $c="#ffff00"><option aria-label="黄" /></Swatch>
                      <DropArrow><Chevron /></DropArrow>
                    </Drop>
                  </Field>
                </Options>
              </Columns>
            </Box>
            <Columns $gap={10}>
              <Box $w={127} $h={183}>
                <legend>底纹样式</legend>
                <Options>
                  {shading.map(([label, key]) => (
                    <Option key={key}>
                      <input type="radio" name="shading" defaultChecked={key === 'F'} />
                      {key === 'F' ? <FocusText>{label}(<u>{key}</u>)</FocusText> : <span>{label}(<u>{key}</u>)</span>}
                    </Option>
                  ))}
                </Options>
              </Box>
              <Box $w={137} $h={183}>
                <legend>变形(<u>A</u>)</legend>
                <Thumbs>
                  <Thumb aria-label="左上"><CornerFade id="a" /></Thumb>
                  <Thumb aria-label="右上"><CornerFade id="b" fx /></Thumb>
                  <Thumb aria-label="左下"><CornerFade id="c" fy /></Thumb>
                  <Thumb aria-label="右下"><CornerFade id="d" fx fy /></Thumb>
                </Thumbs>
              </Box>
            </Columns>
          </Spread>
          <SampleArea>
            <span>示例:</span>
            <Sample><CornerFade id="s" /></Sample>
          </SampleArea>
        </Columns>
      </Panel>
      <DialogFoot>
        <PushButton $hot>确定</PushButton>
        <PushButton>取消</PushButton>
      </DialogFoot>
    </Dialog>
  );
}

export default function App() {
  return (
    <Shell>
      <Global />
      <TitleBar>
        <QuickAccess>
          <Tool $w={28}><SaveIcon /></Tool>
          <Tool $w={38}><UndoIcon /><Caret /></Tool>
          <Tool $w={36}><UndoIcon flip /><Caret /></Tool>
          <Tool $w={26}><PreviewIcon /></Tool>
          <Tool $w={30}><svg width="6" height="8"><path d="M0 1h6v1H0zM0 4h6L3 7z" fill="#3f8a7c" /></svg></Tool>
        </QuickAccess>
        <Title>{'新建 Microsoft Excel 工作表 (2)  -  Excel'}</Title>
        <WindowControls>
          <SignIn>登录</SignIn>
          <Tool $w={46}><svg width="14" height="11" fill="none" stroke="#999"><path d="M.5.500h13v10H.5zM.5 2.500h13M7 9V5M5 6.500l2-2 2 2" /></svg></Tool>
          <Tool $w={46}><svg width="11" height="11" stroke="#999"><path d="M0 5.500h11" /></svg></Tool>
          <Tool $w={46}><svg width="11" height="11" fill="none" stroke="#999"><path d="M.5 2.500h8v8h-8zM2.500 2V.500h8v8H9" /></svg></Tool>
          <Tool $w={46}><Cross c="#999" /></Tool>
        </WindowControls>
      </TitleBar>
      <TabStrip>
        <FileTab>文件</FileTab>
        <TabList>
          <RibbonTab $active>开始</RibbonTab>
          {ribbonTabs.map((t) => (
            <RibbonTab key={t}>{t}</RibbonTab>
          ))}
          <TellMe><BulbIcon />操作说明搜索</TellMe>
          <Share><PersonIcon />共享</Share>
        </TabList>
      </TabStrip>
      <RibbonBar />
      <FormulaBar>
        <NameBox>
          <input aria-label="名称框" defaultValue="B2" size={1} />
          <Tri d="M0 2h8L4 6z" c="#888" />
        </NameBox>
        <Dots><i /><i /><i /></Dots>
        <EditButtons>
          <Cross s={11} c="#bbb" w={1.5} />
          <svg width="13" height="11" fill="none" stroke="#bbb" strokeWidth="2"><path d="M1 5.500l3.500 4L12 1" /></svg>
          <FxMark>fx</FxMark>
        </EditButtons>
        <FormulaBox>
          <input aria-label="编辑栏" defaultValue="81717" />
          <Chevron c="#aaa" />
        </FormulaBox>
      </FormulaBar>
      <Sheet />
      <SheetTabs>
        <TabNav>
          <Tri d="M6 0v8L2 4z" c="#217346" />
          <Tri d="M2 0v8l4-4z" c="#bbb" />
          <span>...</span>
        </TabNav>
        {sheets.map(([name, w]) => (
          <SheetTab key={name} $w={w} $active={name === '表二 (3)'}>{name}</SheetTab>
        ))}
        <AddSheet aria-label="新工作表">
          <svg width="16" height="16" fill="none" stroke="#666"><circle cx="8" cy="8" r="7.500" /><path d="M4 8h8M8 4v8" strokeWidth="2" /></svg>
        </AddSheet>
        <HGrip><Dots><i /><i /><i /></Dots></HGrip>
        <HScroll>
          <ScrollButton aria-label="向左滚动"><Tri d="M6 0v8L2 4z" /></ScrollButton>
          <HThumb />
          <ScrollButton aria-label="向右滚动"><Tri d="M2 0v8l4-4z" /></ScrollButton>
        </HScroll>
      </SheetTabs>
      <StatusBar>
        <svg width="13" height="13" fill="none" stroke="#fff"><path d="M1.500 3.500h11v9h-11zM1.500 6.500h11M1.500 9.500h11M5 4v9M9 4v9" /><circle cx="3" cy="3" r="3" fill="#fff" stroke="none" /></svg>
        <Stats><span>平均值: 59000</span><span>计数: 132</span><span>求和: 7735000</span></Stats>
        <View $on aria-label="普通"><svg width="14" height="13" fill="none" stroke="#fff"><path d="M.5.500h12v12H.5zM.5 4.500h12M.5 8.500h12M4.500.500v12M8.500.500v12" /></svg></View>
        <View aria-label="页面布局"><svg width="14" height="13" fill="none" stroke="#fff"><path d="M.5.500h13v12H.5zM3.500 2.500h7v8h-7zM5 4.500h4M5 6.500h4M5 8.500h4" /></svg></View>
        <View aria-label="分页预览"><svg width="14" height="13" fill="none" stroke="#fff"><path d="M.5.500h13v12H.5z" /><path d="M1 1h5v7H1zM8 1h5v5H8z" fill="#fff" stroke="none" /></svg></View>
        <Zoom>
          <svg width="8" height="9" stroke="#cfe3d8"><path d="M0 4.500h8" /></svg>
          <input type="range" aria-label="缩放" defaultValue={50} />
          <svg width="9" height="9" stroke="#cfe3d8"><path d="M0 4.500h9M4.500 0v9" /></svg>
        </Zoom>
        <ZoomText>100%</ZoomText>
      </StatusBar>
      <FormatCells />
      <FillEffects />
      <Highlight $x={803} $y={566} $w={110} $h={40} />
      <Highlight $x={1012} $y={691} $w={81} $h={51} />
      <Floating $x={912} $y={-27}><Ball>86</Ball></Floating>
      <Floating $x={1171} $y={0}>
        <svg width="58" height="13"><path d="M8 6h45" stroke="#444c55" strokeWidth="6" strokeLinecap="round" /><path d="M8 6h39" stroke="#a3433a" strokeWidth="3" /><circle cx="7" cy="6" r="5" fill="#e8411c" stroke="#555" /></svg>
      </Floating>
      <Floating $x={1229} $y={680}><Watermark /></Floating>
    </Shell>
  );
}
